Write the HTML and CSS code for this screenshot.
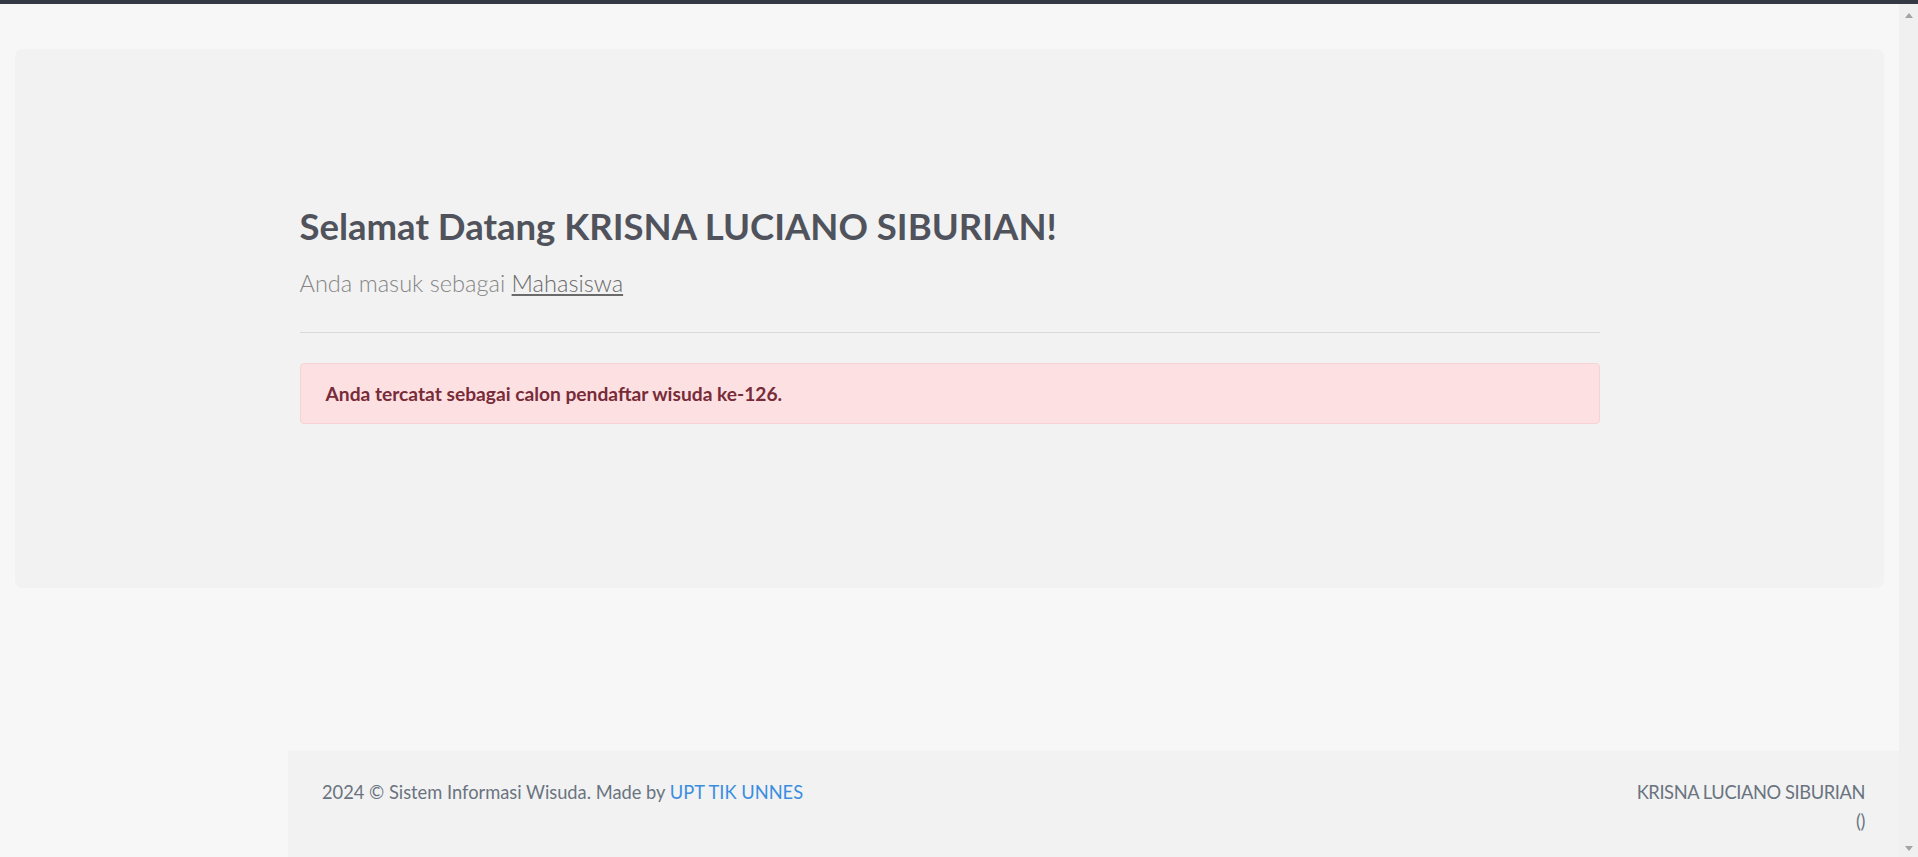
FILE: index.html
```html
<!DOCTYPE html>
<html lang="id">
<head>
<meta charset="utf-8">
<title>Sistem Informasi Wisuda</title>
<link rel="stylesheet" href="styles.css">
</head>
<body>
<div class="topbar"></div>
<div class="viewport">
  <div class="page">
    <section class="jumbotron">
      <div class="container">
        <h1 class="title">Selamat Datang KRISNA LUCIANO SIBURIAN!</h1>
        <p class="lead">Anda masuk sebagai <a href="#" class="role">Mahasiswa</a></p>
        <hr class="divider">
        <div class="alert">Anda tercatat sebagai calon pendaftar wisuda ke-126.</div>
      </div>
    </section>
    <footer class="footer">
      <div class="footer-left">2024 © Sistem Informasi Wisuda. Made by <a href="#" class="footer-link">UPT TIK UNNES</a></div>
      <div class="footer-right">KRISNA LUCIANO SIBURIAN<br>()</div>
    </footer>
  </div>
  <div class="scrollbar">
    <span class="arrow arrow-up"></span>
    <span class="arrow arrow-down"></span>
  </div>
</div>
</body>
</html>
```

FILE: styles.css
```css
html, body {
  margin: 0;
  padding: 0;
  height: 100%;
  overflow: hidden;
}
body {
  font-family: "Lato", "Liberation Sans", sans-serif;
  background: #f7f7f7;
  display: flex;
  flex-direction: column;
}
.topbar {
  height: 4px;
  background: #343a44;
  flex: none;
}
.viewport {
  flex: 1;
  display: flex;
  min-height: 0;
}
.page {
  flex: 1;
  display: flex;
  flex-direction: column;
  background: #f7f7f7;
  overflow: hidden;
}
.jumbotron {
  margin: 45px 15px 0 15px;
  height: 539px;
  box-sizing: border-box;
  padding-top: 156px;
  background: #f2f2f2;
  border-radius: 8px;
  flex: none;
}
.container {
  width: 1300px;
  margin: 0 auto;
}
.title {
  margin: 0 0 19px 0;
  font-size: 36.5px;
  line-height: 43px;
  font-weight: 700;
  color: #50535c;
}
.lead {
  margin: 0;
  font-size: 23.6px;
  line-height: 33px;
  font-weight: 300;
  color: #858585;
}
.role {
  color: #6a6a6a;
  text-decoration: underline;
}
.divider {
  margin: 32px 0 0 0;
  border: 0;
  border-top: 1px solid #dadada;
  height: 0;
}
.alert {
  margin-top: 30px;
  border: 1px solid #f8d3d6;
  background: #fde0e2;
  border-radius: 4px;
  padding: 16px 20px 16px 25px;
  font-size: 19.2px;
  line-height: 27px;
  font-weight: 700;
  color: #782b38;
}
.footer {
  margin: 163px 0 0 288px;
  flex: 1;
  background: #f2f2f2;
  padding: 27px 34px 0 34px;
  display: flex;
  justify-content: space-between;
  align-items: flex-start;
  font-size: 18.3px;
  line-height: 29px;
  color: #6a7480;
}
.footer-link {
  color: #3a8ee0;
  text-decoration: none;
}
.footer-right {
  text-align: right;
  letter-spacing: -0.4px;
}
.scrollbar {
  width: 19px;
  flex: none;
  background: #f0f0f0;
  display: flex;
  flex-direction: column;
  justify-content: space-between;
  align-items: center;
  padding: 9px 0 6px 0;
  box-sizing: border-box;
}
.arrow {
  width: 0;
  height: 0;
  border-left: 4.5px solid transparent;
  border-right: 4.5px solid transparent;
}
.arrow-up {
  border-bottom: 5px solid #a3a3a3;
}
.arrow-down {
  border-top: 5px solid #a3a3a3;
}
```
